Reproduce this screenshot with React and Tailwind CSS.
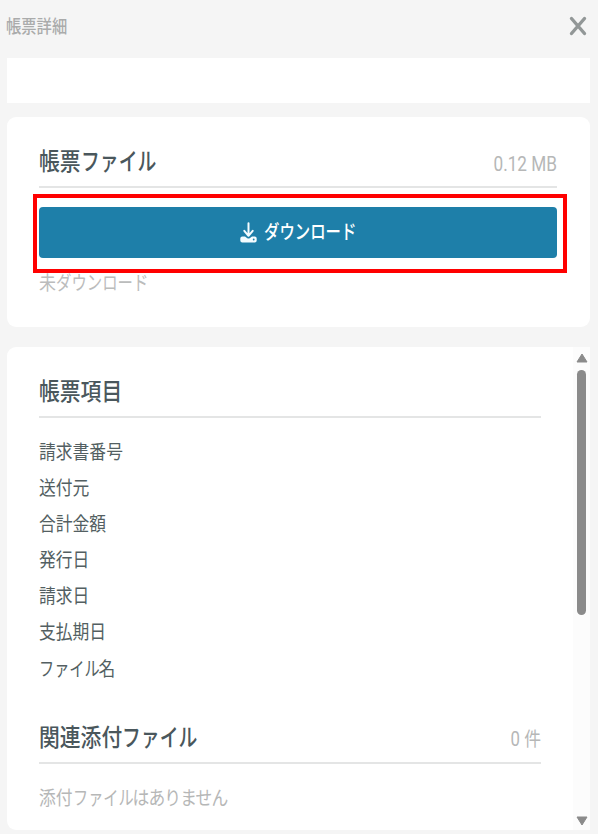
import React from 'react';

const items = ['請求書番号', '送付元', '合計金額', '発行日', '請求日', '支払期日'];

// Condensed kana run; `w` classes reserve the condensed advance.
function Kana({ children, className }) {
  return (
    <span className={`inline-block whitespace-nowrap ${className}`}>
      <span className="inline-block origin-left scale-x-[0.905]">{children}</span>
    </span>
  );
}

function Tall({ children, className = '' }) {
  return (
    <span className={`inline-block whitespace-nowrap origin-left scale-y-[1.17] ${className}`}>
      {children}
    </span>
  );
}

function SectionHead({ children, aside }) {
  return (
    <div className="flex h-[51px] items-center justify-between border-b-2 border-[#e4e5e5] text-[#4a575c]">
      <Tall className="mt-px text-[20.8px] leading-[26px] font-medium">{children}</Tall>
      {aside}
    </div>
  );
}

export default function App() {
  return (
    <div className="h-[834px] w-[598px] overflow-hidden bg-[#f5f5f5] pl-[7px] pr-2 font-['Roboto','Noto_Sans_CJK_JP',sans-serif] text-[#535f62]">
      <header className="flex h-[58px] items-center justify-between pr-[3px] pb-[6px] text-[#aaabab]">
        <Tall className="mt-[2px] -ml-px text-[15.3px] font-medium">帳票詳細</Tall>
        <svg width="18" height="20" viewBox="0 0 18 20" fill="none" stroke="#929797" strokeWidth="3.4" strokeLinecap="round">
          <path d="M2.500 2.500 15.500 17.500M15.500 2.500 2.500 17.500" />
        </svg>
      </header>

      <div className="h-[45px] bg-white" />

      <section className="mt-[14px] h-[210px] rounded-[9px] bg-white pr-[33px] pl-8 pt-5">
        <SectionHead
          aside={<Tall className="mt-[6px] origin-right text-[17.2px] text-[#b6b7b7]">0.12 MB</Tall>}
        >
          帳票<Kana className="w-[75px]">ファイル</Kana>
        </SectionHead>
        <div className="-ml-[6px] -mr-[10px] mt-[6px] h-[79px] border-4 border-[#ff0000] pl-[2px] pr-[6px] pt-[9px]">
          <button className="flex h-[51px] w-full items-center justify-center gap-[7px] rounded-[4px] bg-[#1e7fa9] text-white">
            <svg width="17" height="21" viewBox="0 0 17 21" fill="none" stroke="#f4fcff" strokeWidth="2" strokeLinecap="round" strokeLinejoin="round">
              <path d="M8.500 1.200V13M4.300 8.800l4.200 5 4.200-5" />
              <path fill="#f4fcff" stroke="none" d="M2.300 14.500h2.700l2 1.500q1.500 1 3 0l2-1.500h2.700q2 0 2 2v2q0 2-2 2H2.300q-2 0-2-2v-2q0-2 2-2Z" />
              <circle cx="13.700" cy="17.500" r=".9" fill="#1e7fa9" stroke="none" />
            </svg>
            <Tall className="text-[17px] font-medium">
              <Kana className="w-[92px] text-left">ダウンロード</Kana>
            </Tall>
          </button>
        </div>
        <div className="-mt-[2px] text-[17px] text-[#bbbcbc]">
          <Tall>未<Kana className="w-[92px]">ダウンロード</Kana></Tall>
        </div>
      </section>

      <section className="mt-5 flex h-[483px] justify-between rounded-[9px] bg-white pl-8">
        <div className="w-[502px] pt-5">
          <SectionHead>帳票項目</SectionHead>
          <ul className="mt-[17px] text-[16.8px]">
            {items.map((item) => (
              <li key={item} className="flex h-9 items-center"><Tall>{item}</Tall></li>
            ))}
            <li className="flex h-9 items-center pt-px">
              <Tall><Kana className="w-[59.500px]">ファイル</Kana>名</Tall>
            </li>
          </ul>
          <div className="mt-[26px]">
            <SectionHead
              aside={<Tall className="mt-[5px] origin-right text-[16.8px] text-[#b6b7b7]">0 件</Tall>}
            >
              関連添付<Kana className="w-[75px]">ファイル</Kana>
            </SectionHead>
          </div>
          <div className="mt-[22px] text-[16.8px] text-[#b6b7b7]">
            <Tall>添付<Kana className="w-[60px]">ファイル</Kana><span className="tracking-[-0.9px]">はありません</span></Tall>
          </div>
        </div>
        <div className="flex w-[17px] flex-col items-center bg-[#fcfcfc] pt-[6px] pb-[4px]">
          <svg width="12" height="10" viewBox="0 0 12 10" fill="#8b8b8b" stroke="#8b8b8b" strokeLinejoin="round">
            <path d="M6 1 11 9H1Z" />
          </svg>
          <div className="mt-[7px] h-[245px] w-[9px] rounded-full bg-[#8b8b8b]" />
          <svg className="mt-auto" width="12" height="10" viewBox="0 0 12 10" fill="#8b8b8b" stroke="#8b8b8b" strokeLinejoin="round">
            <path d="M1 1H11L6 9Z" />
          </svg>
        </div>
      </section>
    </div>
  );
}
